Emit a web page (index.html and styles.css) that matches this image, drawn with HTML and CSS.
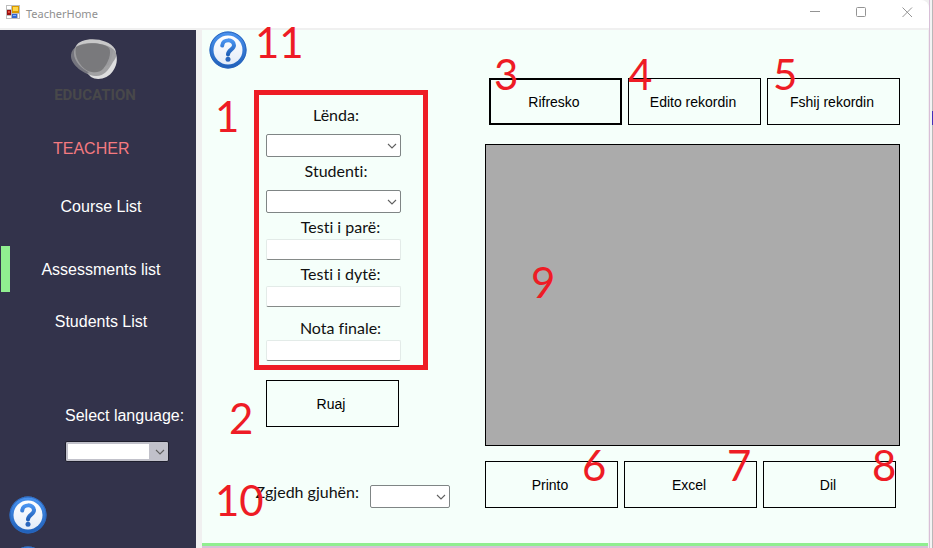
FILE: index.html
```html
<!DOCTYPE html>
<html lang="sq">
<head>
<meta charset="utf-8">
<title>TeacherHome</title>
<link rel="stylesheet" href="styles.css">
</head>
<body>
<svg class="defs" aria-hidden="true">
  <defs>
    <linearGradient id="ring" x1="0" y1="0" x2="0" y2="1">
      <stop offset="0" stop-color="#4a94f0"/><stop offset="1" stop-color="#1f5fb8"/>
    </linearGradient>
    <linearGradient id="face" x1="0" y1="0" x2="0" y2="1">
      <stop offset="0" stop-color="#ffffff"/><stop offset="1" stop-color="#e4ecf8"/>
    </linearGradient>
    <symbol id="help" viewBox="0 0 38 38">
      <circle cx="19" cy="19" r="18.5" fill="url(#ring)"/>
      <circle cx="19" cy="19" r="18" fill="none" stroke="#2a66bd"/>
      <circle cx="19" cy="19" r="14.5" fill="url(#face)"/>
      <path d="M13.200 14.600C13.600 7.600 25 7.800 25 14.200c0 4.400-6 4.600-6 9.400" fill="none" stroke="url(#ring)" stroke-width="4" stroke-linecap="round"/>
      <circle cx="19" cy="28.300" r="2.500" fill="#2a66bd"/>
    </symbol>
    <symbol id="chevron" viewBox="0 0 10 6">
      <path d="M1 1l4 4 4-4" fill="none" stroke="#606060" stroke-width="1.100"/>
    </symbol>
  </defs>
</svg>
<div class="window">
  <header class="titlebar">
    <svg class="app-icon" viewBox="0 0 14 14" aria-hidden="true">
      <path d="M0 0h14v14H0z" fill="#bdbdbd"/>
      <path d="M1 1h4v3H1zM1 11h4v2H1zM12 9h1v4h-1z" fill="#fff"/>
      <path d="M1 5h4v5H1z" fill="#9c1010"/><path d="M2 6h2v2H2z" fill="#e04a3a"/>
      <path d="M6 1h7v7H6z" fill="#d99a00"/><path d="M7 2h5v4H7z" fill="#ffd84a"/>
      <path d="M6 9h5v4H6z" fill="#3468d0"/><path d="M7 10h3v1H7z" fill="#7fb0ff"/>
    </svg>
    <span class="title">TeacherHome</span>
    <div class="controls">
      <button type="button" aria-label="Minimize"><svg viewBox="0 0 11 11"><path d="M0 4.500h10"/></svg></button>
      <button type="button" aria-label="Maximize"><svg viewBox="0 0 11 11"><rect x=".5" y=".5" width="9" height="9" rx="1"/></svg></button>
      <button type="button" aria-label="Close"><svg viewBox="0 0 11 11"><path d="M.5.5l9.500 9.500M10 .5L.5 10"/></svg></button>
    </div>
  </header>
  <div class="workspace">
    <aside class="sidebar">
      <svg class="logo" viewBox="0 0 86 66" role="img" aria-label="Education">
        <path d="M24 8C29-2 56-1 63 11c2 4 1 9-3 15-6 9-14 12-22 9C26 29 18 18 24 8z" fill="#c8c8c9"/>
        <path d="M62 11c4 7 4 15-1 22-5 8-16 10-22 6l-4-4 22-8z" fill="#dededf"/>
        <path d="M19 17c1-10 15-14 29-11 16 3 20 10 13 18-5 9-10 15-18 14-10-1-25-11-24-21z" fill="#8c8c8f" fill-opacity=".75"/>
        <path d="M24 9c10-5 26-5 33 1 3 5-1 15-6 21-4 4-9 4-15 2C27 28 22 18 24 9z" fill="#737376" fill-opacity=".85"/>
        <text x="43" y="62" text-anchor="middle">EDUCATION</text>
      </svg>
      <h1 class="role">TEACHER</h1>
      <nav class="nav">
        <a href="#courses">Course List</a>
        <a href="#assessments" class="active" aria-current="page">Assessments list</a>
        <a href="#students">Students List</a>
      </nav>
      <div class="side-language">
        <label for="side-lang">Select language:</label>
        <div class="select side-select">
          <select id="side-lang"><option></option></select>
          <svg><use href="#chevron"/></svg>
        </div>
      </div>
      <button type="button" class="help side-help" aria-label="Help"><svg><use href="#help"/></svg></button>
      <button type="button" class="help" aria-label="Help"><svg><use href="#help"/></svg></button>
    </aside>
    <main class="content">
      <section class="entry">
        <div class="entry-head">
          <button type="button" class="help" aria-label="Help"><svg><use href="#help"/></svg></button>
          <span class="mark mark-11">11</span>
        </div>
        <form class="form" id="grades">
          <span class="mark mark-1">1</span>
          <div class="field pick">
            <label for="subject">Lënda:</label>
            <div class="select"><select id="subject"><option></option></select><svg><use href="#chevron"/></svg></div>
          </div>
          <div class="field pick">
            <label for="student">Studenti:</label>
            <div class="select"><select id="student"><option></option></select><svg><use href="#chevron"/></svg></div>
          </div>
          <div class="field score">
            <label for="test1">Testi i parë:</label>
            <input id="test1" type="text">
          </div>
          <div class="field score">
            <label for="test2">Testi i dytë:</label>
            <input id="test2" type="text">
          </div>
          <div class="field score final">
            <label for="final">Nota finale:</label>
            <input id="final" type="text">
          </div>
        </form>
        <div class="tool save">
          <button type="submit" form="grades">Ruaj</button>
          <span class="mark mark-2">2</span>
        </div>
        <div class="language">
          <label for="lang">Zgjedh gjuhën:</label>
          <div class="select"><select id="lang"><option></option></select><svg><use href="#chevron"/></svg></div>
          <span class="mark mark-10">10</span>
        </div>
      </section>
      <section class="records">
        <div class="tools top">
          <div class="tool"><button type="button" class="default">Rifresko</button><span class="mark mark-3">3</span></div>
          <div class="tool"><button type="button">Edito rekordin</button><span class="mark mark-4">4</span></div>
          <div class="tool"><button type="button">Fshij rekordin</button><span class="mark mark-5">5</span></div>
        </div>
        <div class="grid"><span class="mark mark-9">9</span></div>
        <div class="tools bottom">
          <div class="tool"><button type="button">Printo</button><span class="mark mark-6">6</span></div>
          <div class="tool"><button type="button">Excel</button><span class="mark mark-7">7</span></div>
          <div class="tool"><button type="button">Dil</button><span class="mark mark-8">8</span></div>
        </div>
      </section>
    </main>
  </div>
</div>
<div class="backdrop"><i></i></div>
</body>
</html>
```
FILE: styles.css
```css
* { box-sizing: border-box; }

body {
  margin: 0;
  height: 100vh;
  display: flex;
  overflow: hidden;
  background: #f3f3f3;
  font-family: "Liberation Sans", Arial, sans-serif;
}

button, input, select { font: inherit; color: inherit; margin: 0; }
.defs { position: absolute; width: 0; height: 0; }

.window {
  flex: 1;
  min-width: 0;
  display: flex;
  flex-direction: column;
  background: #f0f0f0;
}

.titlebar {
  flex: none;
  display: flex;
  align-items: center;
  height: 28px;
  margin-bottom: 2px;
  padding-left: 6px;
  background: #fff;
  border-top-right-radius: 8px;
}
.app-icon { width: 14px; height: 14px; margin: 0 6px 4px 0; }
.title { font: 11px/24px "Noto Sans", sans-serif; color: #909090; }
.controls { display: flex; margin-left: auto; }
.controls button {
  width: 46px;
  height: 28px;
  padding: 0 0 4px 2px;
  border: 0;
  background: none;
}
.controls svg {
  display: block;
  width: 11px;
  height: 11px;
  margin: auto;
  fill: none;
  stroke: #949494;
}

.workspace { flex: 1; min-height: 0; display: flex; gap: 6px; }

.sidebar {
  flex: none;
  width: 196px;
  display: flex;
  flex-direction: column;
  padding-top: 8px;
  overflow: hidden;
  background: #33334b;
  color: #fff;
  font-size: 16px;
}
.sidebar > * { flex: none; }
.logo { width: 86px; height: 66px; margin-left: 52px; }
.logo text {
  font: bold 15px Roboto, "Liberation Sans", sans-serif;
  fill: #48484a;
}
.role {
  margin: 33px 0 22px 53px;
  font-size: 16px;
  font-weight: normal;
  line-height: 24px;
  color: #f47a80;
}
.nav { display: flex; flex-direction: column; padding-left: 1px; }
.nav a {
  height: 46px;
  margin-bottom: 6px;
  line-height: 48px;
  padding-right: 4px;
  border-left: 9px solid transparent;
  text-align: center;
  color: inherit;
  text-decoration: none;
}
.nav a:first-child { margin-bottom: 17px; }
.nav .active { border-color: #90ee90; }

.side-language { margin: 54px 0 34px 65px; }
.side-language label { display: block; line-height: 24px; margin-bottom: 13px; white-space: nowrap; }

.help {
  display: block;
  width: 38px;
  height: 38px;
  padding: 0;
  border: 0;
  background: none;
}
.help svg { display: block; width: 38px; height: 38px; }
.sidebar .help { margin-left: 9px; }
.sidebar .side-help { margin-bottom: 12px; }

.select { position: relative; }
.select select {
  display: block;
  width: 100%;
  height: 23px;
  padding: 0 20px 0 4px;
  border: 1px solid #7f8585;
  border-radius: 2px;
  background: #fff;
  appearance: none;
}
.select svg {
  position: absolute;
  right: 4px;
  top: 9px;
  width: 10px;
  height: 6px;
  pointer-events: none;
}
.side-select { width: 104px; }
.side-select select {
  height: 21px;
  padding: 2px 19px 2px 2px;
  border-color: #1e1e2d;
  background: linear-gradient(#fff, #fff) content-box, #c1c1ca;
}
.side-select svg { top: 8px; }

.content {
  flex: 1;
  min-width: 0;
  display: grid;
  grid-template-columns: 283px minmax(0, 1fr);
  margin-right: 1px;
  padding-right: 28px;
  background: #f5fffa;
  border-bottom: 2px solid #d8bfd8;
  box-shadow: inset 0 -3px #90ee90;
}

.entry {
  font: 16px/20px Lato, sans-serif;
  font-variant-ligatures: none;
  color: #111;
}
.entry-head { position: relative; height: 60px; padding: 1px 0 0 7px; }

.form {
  position: relative;
  width: 174px;
  margin-left: 52px;
  padding: 10px 22px 4px 7px;
  border: 5px solid #ee1c25;
}
.field { margin-bottom: 4px; }
.field label { display: block; padding-left: 5px; text-align: center; }
.pick label { margin-bottom: 9px; }
.score label { margin-bottom: 2px; padding-left: 14px; }
.field.final { margin: 11px 0 0; }
.field input {
  display: block;
  width: 100%;
  height: 21px;
  padding: 0 4px;
  border: 1px solid #e3ebe8;
  border-bottom-color: #858a88;
  border-radius: 2px;
  background: #fff;
}

.tool { position: relative; flex: 1; min-width: 0; }
.tool button {
  display: block;
  width: 100%;
  height: 47px;
  padding: 0 3px 0 0;
  border: 1px solid #000;
  border-radius: 0;
  background: #f5fffa;
  color: #000;
  font: 14px "Liberation Sans", Arial, sans-serif;
}
.tool .default { border-width: 2px; }
.save { width: 133px; margin: 10px 0 58px 64px; }
.language {
  position: relative;
  display: flex;
  gap: 11px;
  width: 196px;
  margin-left: 52px;
}
.language label { flex: 1; margin-top: -3px; white-space: nowrap; text-align: right; }
.language .select { width: 80px; }

.records { display: flex; flex-direction: column; padding: 48px 0 38px; min-width: 0; }
.tools { display: flex; gap: 6px; }
.top { padding-left: 4px; margin-bottom: 19px; }
.bottom { padding-right: 4px; margin-top: 15px; }
.grid { position: relative; flex: 1; border: 1px solid #000; background: #ababab; }

/* Numbered callouts laid over the controls they refer to */
.mark {
  position: absolute;
  font: 42px/48px Lato, sans-serif;
  color: #ee1c25;
  pointer-events: none;
}
.mark-1 { left: -44px; top: -3px; }
.mark-2 { left: -37px; top: 14px; }
.mark-10 { left: -39px; top: -9px; }
.mark-11 { left: 53px; top: -12px; }
.top .mark { top: -28px; }
.mark-3 { left: 5px; }
.mark-4 { left: 0; }
.mark-5 { left: 6px; }
.bottom .mark { top: -20px; }
.mark-6 { left: 97px; }
.mark-7 { left: 103px; }
.mark-8 { left: 109px; }
.mark-9 { left: 45px; top: 113px; }

.backdrop {
  flex: none;
  width: 4px;
  padding-top: 111px;
  border-left: 1px solid #d8bfd8;
  border-right: 1px solid #b8b8b8;
}
.backdrop i { display: block; width: 1px; height: 14px; margin-left: 2px; background: #4430b8; }
```
